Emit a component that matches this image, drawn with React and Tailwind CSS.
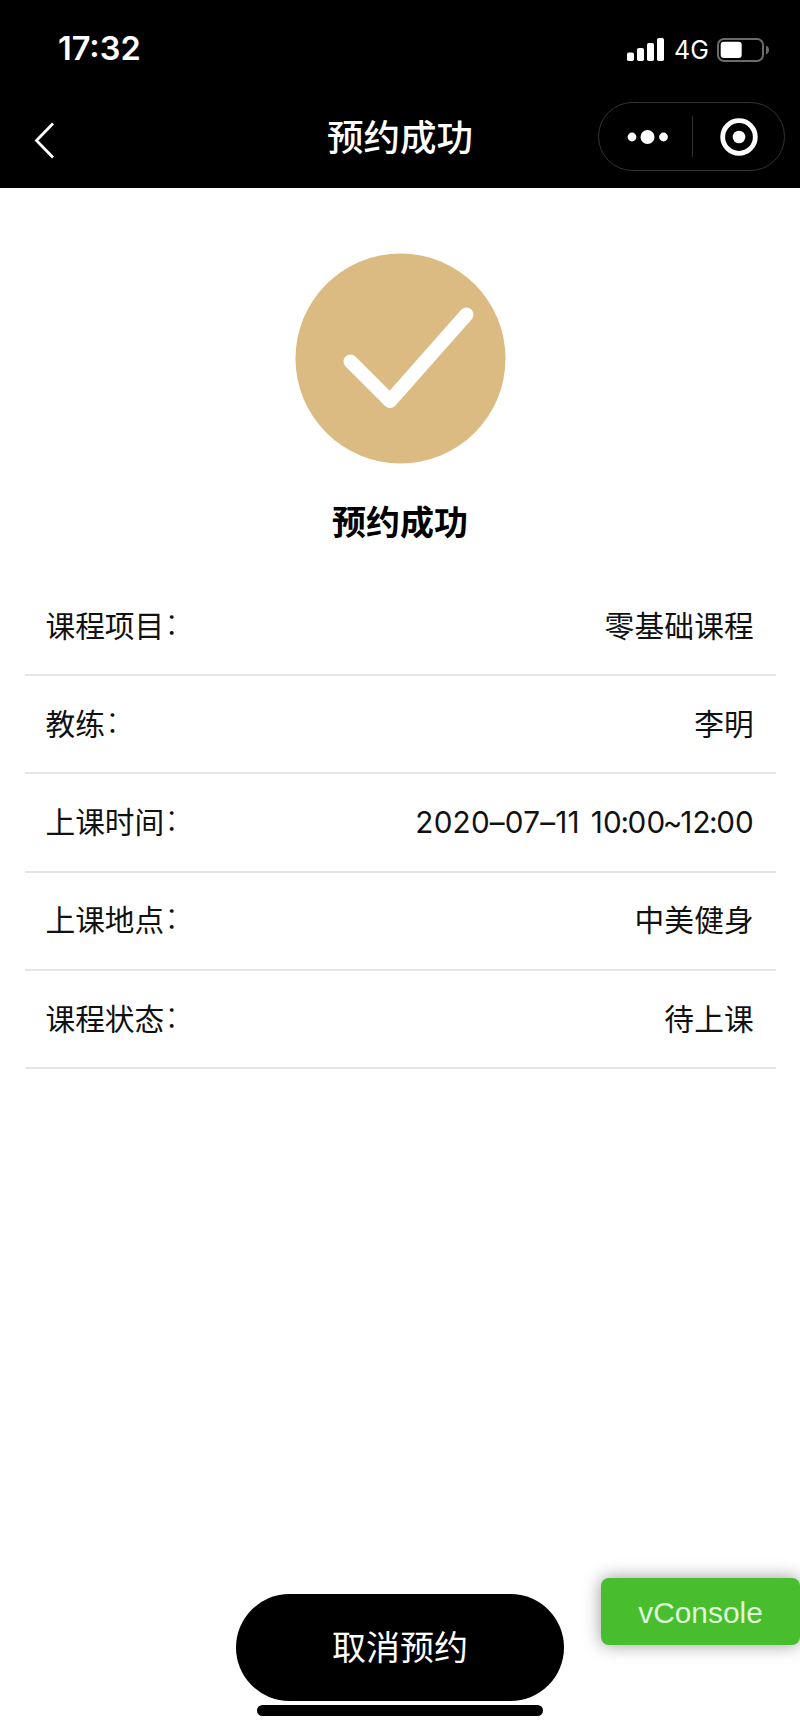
import React from 'react'

const DETAILS = [
  { label: '课程项目', value: '零基础课程' },
  { label: '教练', value: '李明' },
  { label: '上课时间', value: '2020–07–11 10:00~12:00' },
  { label: '上课地点', value: '中美健身' },
  { label: '课程状态', value: '待上课' },
]

// tighter punctuation inside times
const PUNCTUATION = {
  ':': '-mx-[1.7px]',
  '~': '-mx-[2.5px]',
}

function StatusBar() {
  return (
    <div className="flex h-[98px] items-center justify-between pt-px pr-[30px] pl-[58px]">
      <span className="text-[32.5px] leading-none font-semibold">17:32</span>
      <div className="flex items-center">
        <svg width="38" height="24" viewBox="0 0 38 24" fill="currentColor">
          <rect x="0" y="14.5" width="7" height="8.5" rx="1.8" />
          <rect x="10" y="10" width="7" height="13" rx="1.8" />
          <rect x="20" y="5" width="7" height="18" rx="1.8" />
          <rect x="30" y="0" width="7" height="23" rx="1.8" />
        </svg>
        <span className="ml-[9px] w-[35px] pt-[2px] text-[25px] leading-none">4G</span>
        <svg className="ml-[8px]" width="53" height="24" viewBox="0 0 53 24" fill="none">
          <rect x="1" y="1" width="45" height="22" rx="6" stroke="#6b6b6b" strokeWidth="2" />
          <rect x="3.7" y="3.7" width="21" height="16.3" rx="3" fill="#fff" />
          <path d="M49 7.5c2 .8 3 2.4 3 4.5s-1 3.7-3 4.5z" fill="#6b6b6b" />
        </svg>
      </div>
    </div>
  )
}

function NavBar() {
  return (
    <div className="grid h-[90px] grid-cols-[1fr_auto_1fr] items-start">
      <svg className="mt-[23px] ml-[33px]" width="22" height="39" viewBox="0 0 22 39" fill="none">
        <path d="M20 2.5L3.5 19.5L20 36.5" stroke="#fff" strokeWidth="2.8" />
      </svg>
      <h1 className="mt-[13px] text-[36.5px] leading-[54px] font-medium">预约成功</h1>
      <div className="mt-[4px] mr-[15px] flex h-[69px] w-[187px] items-center justify-self-end rounded-full border border-[#333]">
        <svg className="ml-[28px]" width="42" height="16" viewBox="0 0 42 16" fill="currentColor">
          <circle cx="5" cy="8" r="4.4" />
          <circle cx="20.5" cy="8" r="7" />
          <circle cx="36.5" cy="8" r="4.4" />
        </svg>
        <span className="ml-[23px] h-[41px] w-px bg-[#333]" />
        <svg className="ml-[27px]" width="38" height="38" viewBox="0 0 38 38" fill="none">
          <circle cx="19" cy="19" r="16.3" stroke="#fff" strokeWidth="4.8" />
          <circle cx="19" cy="19" r="6.3" fill="#fff" />
        </svg>
      </div>
    </div>
  )
}

function DetailRow({ label, value }) {
  return (
    <div className="flex h-[98.2px] items-center justify-between border-b-2 border-[#e5e5e5] pr-[21.5px] pl-[21px] text-[29.7px] text-[#111]">
      <span>
        {label}
        <span className="relative -top-[3px] font-light">：</span>
      </span>
      <span className="tracking-[0.2px] [word-spacing:2.5px]">
        {value.split(/([:~])/).map((part, i) => (
          <span key={i} className={PUNCTUATION[part]}>{part}</span>
        ))}
      </span>
    </div>
  )
}

export default function App() {
  return (
    <div className="flex h-[1733px] w-[800px] flex-col overflow-hidden bg-white font-['Inter','Noto_Sans_CJK_SC',sans-serif] text-black">
      <header className="h-[188px] shrink-0 bg-black text-white">
        <StatusBar />
        <NavBar />
      </header>

      <main className="flex flex-1 flex-col items-center">
        <svg className="mt-[65px] shrink-0" width="211" height="211" viewBox="0 0 211 211" fill="none">
          <circle cx="105.5" cy="105.5" r="105" fill="#dbbb82" />
          <path
            d="M55.5 108.5L95 148L171.5 61.5"
            stroke="#fff"
            strokeWidth="14"
            strokeLinecap="round"
            strokeLinejoin="round"
          />
        </svg>
        <h2 className="mt-[34px] text-[34px] leading-[50px] font-bold">预约成功</h2>

        <section className="mt-[30px] w-[751px]">
          {DETAILS.map((item) => (
            <DetailRow key={item.label} label={item.label} value={item.value} />
          ))}
        </section>
      </main>

      <footer className="relative flex shrink-0 flex-col items-center pb-[17px]">
        <button className="h-[107px] w-[328px] rounded-full bg-black text-[34px] text-white">
          取消预约
        </button>
        <div className="mt-[4px] h-[11px] w-[286px] rounded-full bg-black" />

        {/* floating debug switch */}
        <button className="absolute top-[-16px] right-0 h-[67px] w-[199px] rounded-[8px] bg-[#48bd2d] pt-[3px] font-['Liberation_Sans',sans-serif] text-[29.9px] text-[#dff6da] shadow-[0_0_18px_rgba(0,0,0,0.4)]">
          vConsole
        </button>
      </footer>
    </div>
  )
}
